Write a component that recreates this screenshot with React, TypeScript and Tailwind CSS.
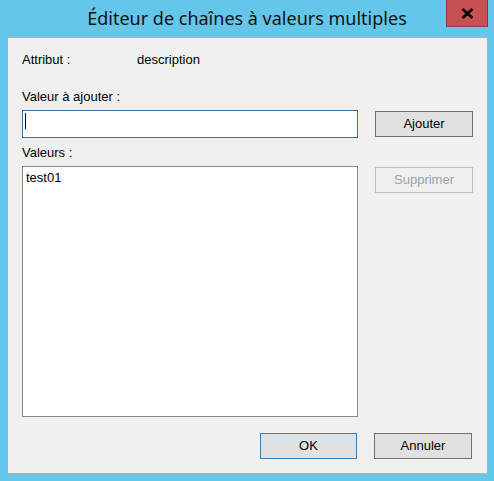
import React from 'react';

const font = { fontFamily: '"Liberation Sans", Arial, sans-serif' };

const Btn: React.FC<{ label: string; variant?: 'default' | 'primary' | 'disabled'; className?: string }> = ({
    label,
    variant = 'default',
    className = '',
}) => {
    const look =
        variant === 'primary'
            ? 'bg-[#e1e1e1] border-[#3c7fb1] text-black'
            : variant === 'disabled'
            ? 'bg-[#f0f0f0] border-[#bfbfbf] text-[#a0a0a0]'
            : 'bg-[#e1e1e1] border-[#707070] text-black';
    return (
        <div className={`h-[26px] border flex items-center justify-center text-[13px] ${look} ${className}`}>
            {label}
        </div>
    );
};

export default function App() {
    return (
        <div className="w-[494px] h-[481px] bg-[#64c7e9] flex flex-col" style={font}>
            {/* title bar */}
            <div className="relative h-[37px] flex items-start justify-center">
                <span
                    className="mt-[5px] text-[18px] leading-[26px] text-[#111]"
                    style={{ fontFamily: '"Noto Sans", "Open Sans", sans-serif' }}
                >
                    Éditeur de chaînes à valeurs multiples
                </span>
                <div className="absolute left-[446px] top-0 w-[42px] h-[27px] bg-[#c75050] border-x border-b border-[#8a3a3a] flex items-center justify-center">
                    <svg width="13" height="11" viewBox="0 0 13 11">
                        <path d="M1.5 1 L11.5 10 M11.5 1 L1.5 10" stroke="#000" strokeWidth="2.6" />
                    </svg>
                </div>
            </div>

            {/* client area */}
            <div className="ml-[8px] w-[480px] h-[437px] bg-[#f0f0f0] border-t border-r border-b border-[#a9b4bb] pt-[14px] pl-[14px] text-[13px] text-black">
                <div className="flex h-[16px] leading-[16px]">
                    <span className="w-[115px]">Attribut :</span>
                    <span>description</span>
                </div>

                <div className="mt-[21px] h-[16px] leading-[16px]">Valeur à ajouter :</div>

                <div className="mt-[5px] flex gap-[17px] items-start">
                    <div className="w-[336px] h-[28px] bg-white border border-[#3a6e99] relative">
                        <div className="absolute left-[2px] top-[2px] w-px h-[16px] bg-black" />
                    </div>
                    <Btn label="Ajouter" className="w-[98px] mt-px" />
                </div>

                <div className="mt-[7px] h-[16px] leading-[16px]">Valeurs :</div>

                <div className="mt-[5px] flex gap-[17px] items-start">
                    <div className="w-[336px] h-[251px] bg-white border border-[#828790] pl-[3px] pt-[3px] leading-[16px]">
                        test01
                    </div>
                    <Btn label="Supprimer" variant="disabled" className="w-[98px] mt-px" />
                </div>

                <div className="mt-[16px] flex justify-end gap-[17px] pr-[15px]">
                    <Btn label="OK" variant="primary" className="w-[97px]" />
                    <Btn label="Annuler" className="w-[98px]" />
                </div>
            </div>
        </div>
    );
}
